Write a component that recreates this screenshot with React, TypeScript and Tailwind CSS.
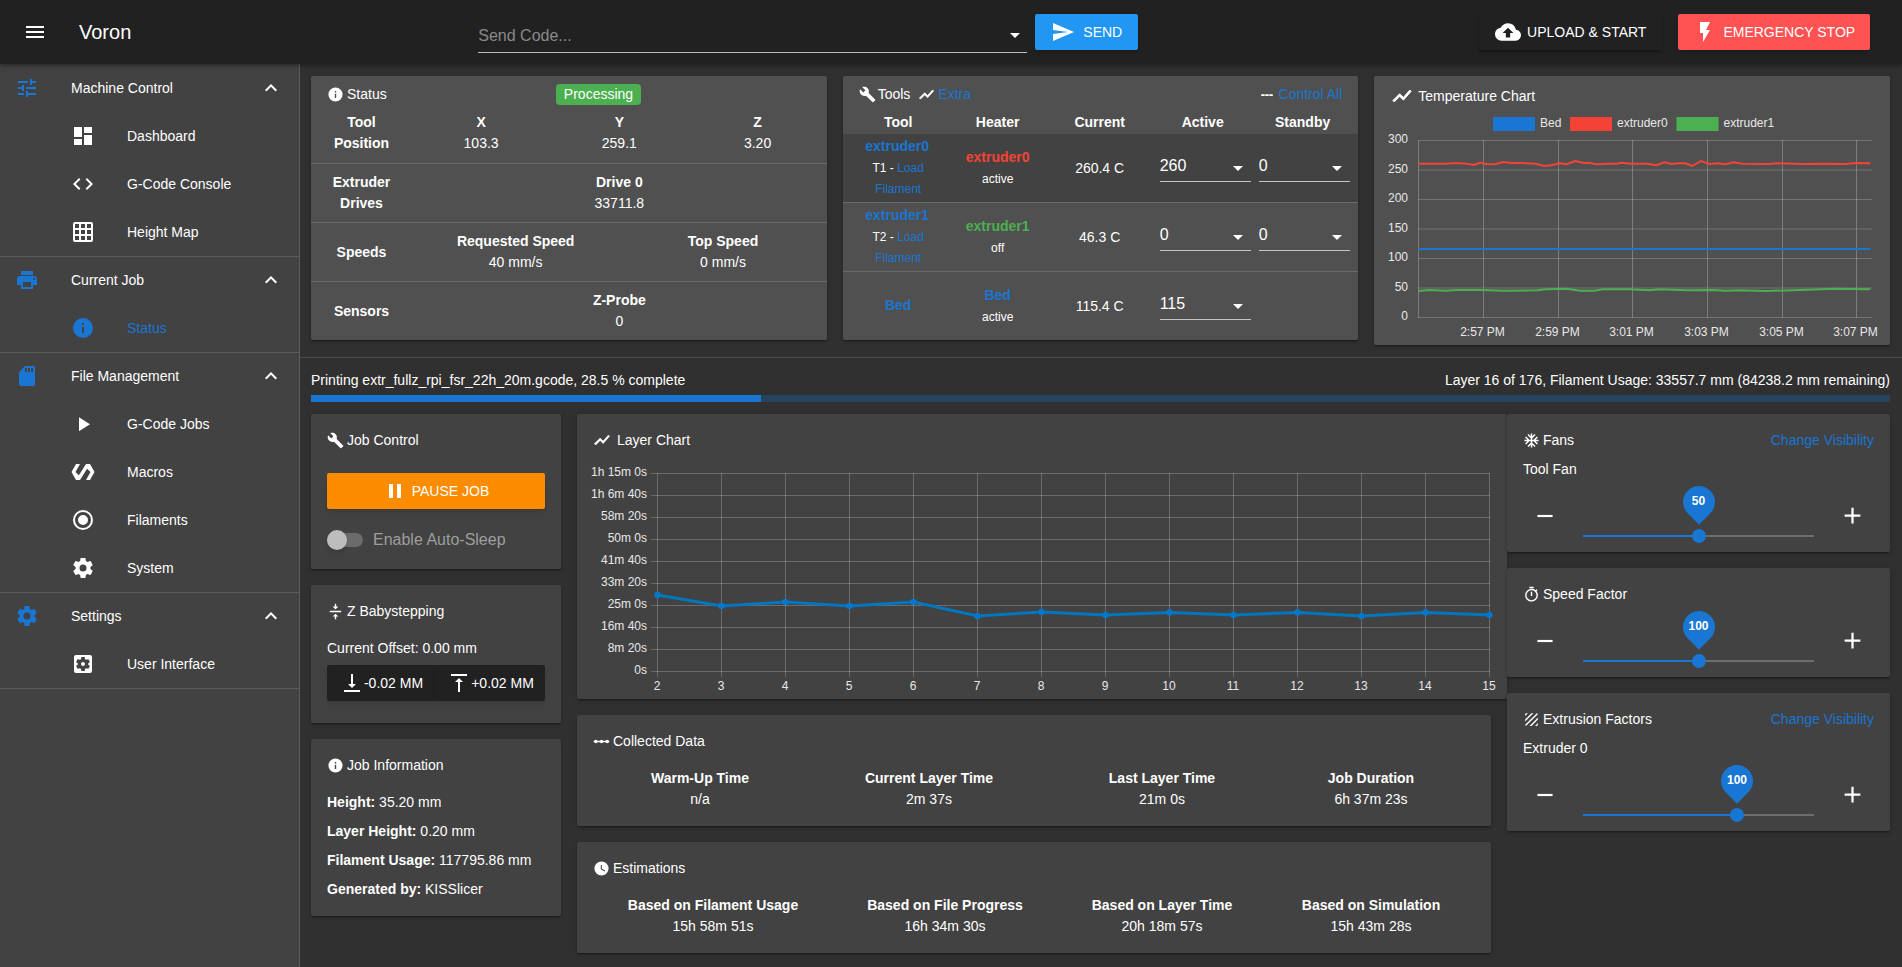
import React from "react";

const P = {
  menu: "M3,6H21V8H3V6M3,11H21V13H3V11M3,16H21V18H3V16Z",
  tune: "M3,17V19H9V17H3M3,5V7H13V5H3M13,21V19H21V17H13V15H11V21H13M7,9V11H3V13H7V15H9V9H7M21,13V11H11V13H21M15,9H17V7H21V5H17V3H15V9Z",
  up: "M7.41,15.41L12,10.83L16.59,15.41L18,14L12,8L6,14L7.41,15.41Z",
  dash: "M13,3V9H21V3M13,21H21V11H13M3,21H11V15H3M3,13H11V3H3V13Z",
  code: "M14.6,16.6L19.2,12L14.6,7.4L16,6L22,12L16,18L14.6,16.6M9.4,16.6L4.8,12L9.4,7.4L8,6L2,12L8,18L9.4,16.6Z",
  grid: "M10,4V8H14V4H10M16,4V8H20V4H16M16,10V14H20V10H16M16,16V20H20V16H16M14,20V16H10V20H14M8,20V16H4V20H8M8,14V10H4V14H8M8,8V4H4V8H8M10,14H14V10H10V14M4,2H20A2,2 0 0,1 22,4V20A2,2 0 0,1 20,22H4C2.92,22 2,21.1 2,20V4A2,2 0 0,1 4,2Z",
  printer: "M18,3H6V7H18M19,12A1,1 0 0,1 18,11A1,1 0 0,1 19,10A1,1 0 0,1 20,11A1,1 0 0,1 19,12M16,19H8V14H16M19,8H5A3,3 0 0,0 2,11V17H6V21H18V17H22V11A3,3 0 0,0 19,8Z",
  info: "M13,9H11V7H13M13,17H11V11H13M12,2A10,10 0 0,0 2,12A10,10 0 0,0 12,22A10,10 0 0,0 22,12A10,10 0 0,0 12,2Z",
  sd: "M18,8H16V4H18M15,8H13V4H15M12,8H10V4H12M18,2H10L4,8V20A2,2 0 0,0 6,22H18A2,2 0 0,0 20,20V4A2,2 0 0,0 18,2Z",
  play: "M8,5.14V19.14L19,12.14L8,5.14Z",
  polymer: "M19,4H15L7.9,15.2L4.5,12L9,4H5L0.5,12L5,20H9L16.1,8.8L19.5,12L15,20H19L23.5,12L19,4Z",
  radio: "M12,20A8,8 0 0,1 4,12A8,8 0 0,1 12,4A8,8 0 0,1 20,12A8,8 0 0,1 12,20M12,2A10,10 0 0,0 2,12A10,10 0 0,0 12,22A10,10 0 0,0 22,12A10,10 0 0,0 12,2M12,7A5,5 0 0,0 7,12A5,5 0 0,0 12,17A5,5 0 0,0 17,12A5,5 0 0,0 12,7Z",
  cog: "M12,15.5A3.5,3.5 0 0,1 8.5,12A3.5,3.5 0 0,1 12,8.5A3.5,3.5 0 0,1 15.5,12A3.5,3.5 0 0,1 12,15.5M19.43,12.97C19.47,12.65 19.5,12.33 19.5,12C19.5,11.67 19.47,11.34 19.43,11L21.54,9.37C21.73,9.22 21.78,8.95 21.66,8.73L19.66,5.27C19.54,5.05 19.27,4.96 19.05,5.05L16.56,6.05C16.04,5.66 15.5,5.32 14.87,5.07L14.5,2.42C14.46,2.18 14.25,2 14,2H10C9.75,2 9.54,2.18 9.5,2.42L9.13,5.07C8.5,5.32 7.96,5.66 7.44,6.05L4.95,5.05C4.73,4.96 4.46,5.05 4.34,5.27L2.34,8.73C2.21,8.95 2.27,9.22 2.46,9.37L4.57,11C4.53,11.34 4.5,11.67 4.5,12C4.5,12.33 4.53,12.65 4.57,12.97L2.46,14.63C2.27,14.78 2.21,15.05 2.34,15.27L4.34,18.73C4.46,18.95 4.73,19.03 4.95,18.95L7.44,17.94C7.96,18.34 8.5,18.68 9.13,18.93L9.5,21.58C9.54,21.82 9.75,22 10,22H14C14.25,22 14.46,21.82 14.5,21.58L14.87,18.93C15.5,18.67 16.04,18.34 16.56,17.94L19.05,18.95C19.27,19.03 19.54,18.95 19.66,18.73L21.66,15.27C21.78,15.05 21.73,14.78 21.54,14.63L19.43,12.97Z",
  cogbox: "M19,3H5C3.89,3 3,3.89 3,5V19A2,2 0 0,0 5,21H19A2,2 0 0,0 21,19V5C21,3.89 20.1,3 19,3M17.25,12C17.25,12.23 17.23,12.46 17.2,12.68L18.68,13.84C18.81,13.95 18.85,14.13 18.76,14.29L17.36,16.71C17.27,16.86 17.09,16.92 16.93,16.86L15.19,16.16C14.83,16.44 14.43,16.67 14,16.85L13.75,18.7C13.72,18.87 13.57,19 13.4,19H10.6C10.43,19 10.28,18.87 10.25,18.7L10,16.85C9.56,16.67 9.17,16.44 8.81,16.16L7.07,16.86C6.91,16.92 6.73,16.86 6.64,16.71L5.24,14.29C5.15,14.13 5.19,13.95 5.32,13.84L6.8,12.68C6.77,12.46 6.75,12.23 6.75,12C6.75,11.77 6.77,11.54 6.8,11.32L5.32,10.16C5.19,10.05 5.15,9.86 5.24,9.71L6.64,7.29C6.73,7.13 6.91,7.07 7.07,7.13L8.81,7.84C9.17,7.56 9.56,7.32 10,7.15L10.25,5.29C10.28,5.13 10.43,5 10.6,5H13.4C13.57,5 13.72,5.13 13.75,5.29L14,7.15C14.44,7.32 14.83,7.56 15.19,7.84L16.93,7.13C17.09,7.07 17.27,7.13 17.36,7.29L18.76,9.71C18.85,9.86 18.81,10.05 18.68,10.16L17.2,11.32C17.23,11.54 17.25,11.77 17.25,12ZM12,10C10.89,10 10,10.89 10,12A2,2 0 0,0 12,14A2,2 0 0,0 14,12C14,10.89 13.1,10 12,10Z",
  wrench: "M22.7,19L13.6,9.9C14.5,7.6 14,4.9 12.1,3C10.1,1 7.1,0.6 4.7,1.7L9,6L6,9L1.6,4.7C0.4,7.1 0.9,10.1 2.9,12.1C4.8,14 7.5,14.5 9.8,13.6L18.9,22.7C19.3,23.1 19.9,23.1 20.3,22.7L22.6,20.4C23.1,20 23.1,19.3 22.7,19Z",
  chart: "M3.5,18.5L9.5,12.5L13.5,16.5L22,6.92L20.59,5.5L13.5,13.5L9.5,9.5L2,17L3.5,18.5Z",
  cloud: "M14,13V17H10V13H7L12,8L17,13M19.35,10.03C18.67,6.59 15.64,4 12,4C9.11,4 6.6,5.64 5.35,8.03C2.34,8.36 0,10.9 0,14A6,6 0 0,0 6,20H19A5,5 0 0,0 24,15C24,12.36 21.95,10.22 19.35,10.03Z",
  flash: "M7,2V13H10V22L17,10H13L17,2H7Z",
  send: "M2,21L23,12L2,3V10L17,12L2,14V21Z",
  pause: "M14,19H18V5H14M6,19H10V5H6V19Z",
  alignB: "M16 13h-3V3h-2v10H8l4 4 4-4zM4 19v2h16v-2H4z",
  alignT: "M8 11h3v10h2V11h3l-4-4-4 4zM4 3v2h16V3H4z",
  alignC: "M8 19h3v4h2v-4h3l-4-4-4 4zm8-14h-3V1h-2v4H8l4 4 4-4zM4 11v2h16v-2H4z",
  snow: "M22 11h-4.17l3.24-3.24-1.41-1.42L15 11h-2V9l4.66-4.66-1.42-1.41L13 6.17V2h-2v4.17L7.76 2.93 6.34 4.34 11 9v2H9L4.34 6.34 2.93 7.76 6.17 11H2v2h4.17l-3.24 3.24 1.41 1.42L9 13h2v2l-4.66 4.66 1.42 1.41L11 17.83V22h2v-4.17l3.24 3.24 1.42-1.41L13 15v-2h2l4.66 4.66 1.41-1.42L17.83 13H22z",
  timer: "M12,20A7,7 0 0,1 5,13A7,7 0 0,1 12,6A7,7 0 0,1 19,13A7,7 0 0,1 12,20M19.03,7.39L20.45,5.97C20,5.46 19.55,5 19.04,4.56L17.62,6C16.07,4.74 14.12,4 12,4A9,9 0 0,0 3,13A9,9 0 0,0 12,22C17,22 21,17.97 21,13C21,10.88 20.26,8.93 19.03,7.39M11,14H13V8H11M15,1H9V3H15V1Z",
  texture: "M9.29,21H12.12L21,12.12V9.29M19,21C19.55,21 20.05,20.78 20.41,20.41C20.78,20.05 21,19.55 21,19V17L17,21M5,3A2,2 0 0,0 3,5V7L7,3M11.88,3L3,11.88V14.71L14.71,3M19.5,3.08L3.08,19.5C3.17,19.84 3.35,20.15 3.59,20.41C3.85,20.65 4.16,20.83 4.5,20.92L20.93,4.5C20.84,4.16 20.65,3.85 20.41,3.59C20.15,3.35 19.84,3.17 19.5,3.08Z",
  clock: "M12,2A10,10 0 0,0 2,12A10,10 0 0,0 12,22A10,10 0 0,0 22,12A10,10 0 0,0 12,2M16.2,16.2L11,13V7H12.5V12.2L17,14.9L16.2,16.2Z",
  minus: "M19,13H5V11H19V13Z",
  plus: "M19,13H13V19H11V13H5V11H11V5H13V11H19V13Z",
  dashes: "M2,10.500H8V13.500H2ZM9,10.500H15V13.500H9ZM16,10.500H22V13.500H16Z",
  dots: "M1,11H23V13H1ZM4,9.500A2.5,2.5 0 1,1 4,14.500A2.5,2.5 0 1,1 4,9.500ZM12,9.500A2.5,2.5 0 1,1 12,14.500A2.5,2.5 0 1,1 12,9.500ZM20,9.500A2.5,2.5 0 1,1 20,14.500A2.5,2.5 0 1,1 20,9.500Z",
};

function Icon({ d, size = 24, className = "", odd = false }: { d: string; size?: number; className?: string; odd?: boolean }) {
  return (
    <svg width={size} height={size} viewBox="0 0 24 24" className={`shrink-0 fill-current ${className}`}>
      <path d={d} fillRule={odd ? "evenodd" : "nonzero"} />
    </svg>
  );
}

const nav = [
  { icon: P.tune, title: "Machine Control", items: [[P.dash, "Dashboard"], [P.code, "G-Code Console"], [P.grid, "Height Map"]] },
  { icon: P.printer, title: "Current Job", items: [[P.info, "Status"]] },
  { icon: P.sd, title: "File Management", items: [[P.play, "G-Code Jobs"], [P.polymer, "Macros"], [P.radio, "Filaments"], [P.cog, "System"]] },
  { icon: P.cog, title: "Settings", items: [[P.cogbox, "User Interface"]] },
];

function Sidebar() {
  return (
    <aside className="w-[300px] h-[903px] shrink-0 bg-[#424242] border-r border-[#5c5c5c] text-sm">
      {nav.map((g, n) => (
        <div key={g.title} className="border-b border-[#5c5c5c]">
          <div className={`${n === 0 ? "h-12" : "h-[47px] pb-px"} flex items-center`}>
            <Icon d={g.icon} className="ml-[15px] text-[#1976d2]" />
            <span className="ml-8 flex-1">{g.title}</span>
            <Icon d={P.up} className="mr-[16px]" />
          </div>
          {g.items.map(([ic, label]) => (
            <div key={label} className={`flex items-center h-12 ${label === "Status" ? "text-[#1976d2]" : ""}`}>
              <Icon d={ic} odd={label === "User Interface"} className="ml-[71px]" />
              <span className="ml-8">{label}</span>
            </div>
          ))}
        </div>
      ))}
    </aside>
  );
}

function Header() {
  return (
    <header className="relative z-10 h-16 bg-[#212121] flex items-center shadow-[0_2px_4px_rgba(0,0,0,0.35)]">
      <Icon d={P.menu} className="ml-[23px]" />
      <span className="ml-[32px] text-xl">Voron</span>
      <div className="ml-[347px] w-[549px] h-[38px] mt-[2px] mb-[-2px] border-b border-[#bdbdbd] flex items-center justify-between pr-[7px]">
        <span className="text-base text-[#8a8a8a] mt-[4px]">Send Code...</span>
        <span className="w-0 h-0 border-x-[5px] border-x-transparent border-t-[5px] border-t-white mt-[4px]" />
      </div>
      <button className="ml-2 w-[103px] h-9 rounded-[2px] bg-[#2196f3] text-sm flex items-center justify-center gap-2 shadow-md">
        <Icon d={P.send} />
        SEND
      </button>
      <button className="ml-[341px] w-[183px] h-9 rounded-[2px] bg-[#212121] text-sm flex items-center justify-center gap-[6px] shadow-[0_2px_3px_rgba(0,0,0,0.35)]">
        <Icon d={P.cloud} size={26} />
        UPLOAD &amp; START
      </button>
      <button className="ml-4 w-[192px] h-9 rounded-[2px] bg-[#ff5252] text-sm flex items-center justify-center gap-[6px] shadow-md">
        <Icon d={P.flash} />
        EMERGENCY STOP
      </button>
    </header>
  );
}

const shadow = "shadow-[0_3px_1px_-2px_rgba(0,0,0,0.2),0_2px_2px_0_rgba(0,0,0,0.14),0_1px_5px_0_rgba(0,0,0,0.12)]";

function Title({ icon, children, className = "" }: { icon: string; children: React.ReactNode; className?: string }) {
  return (
    <div className={`flex items-center gap-[3px] leading-5 ${className}`}>
      <Icon d={icon} size={17} />
      <span>{children}</span>
    </div>
  );
}

function Two({ a, b, boldB = false }: { a: string; b: string; boldB?: boolean }) {
  return (
    <div className="text-center leading-[21px]">
      <div className="font-bold">{a}</div>
      <div className={boldB ? "font-bold" : ""}>{b}</div>
    </div>
  );
}

function StatusCard() {
  return (
    <div className={`bg-[#505050] rounded-[2px] h-[264px] text-sm ${shadow}`}>
      <div className="h-9 flex items-start pt-[8px] pl-4">
        <Title icon={P.info} className="w-[229px] h-[20px]">Status</Title>
        <span className="w-[85px] h-[21px] rounded bg-[#4caf50] text-center leading-[21px]">Processing</span>
      </div>
      <div className="h-[52px] grid grid-cols-[101px_1fr_1fr_1fr] items-start border-b border-[#6a6a6a]">
        <Two a="Tool" b="Position" boldB /><Two a="X" b="103.3" /><Two a="Y" b="259.1" /><Two a="Z" b="3.20" />
      </div>
      <div className="h-[59px] grid grid-cols-[101px_1fr] items-center border-b border-[#6a6a6a]">
        <Two a="Extruder" b="Drives" boldB /><Two a="Drive 0" b="33711.8" />
      </div>
      <div className="h-[59px] grid grid-cols-[101px_1fr_1fr] items-center border-b border-[#6a6a6a]">
        <div className="text-center font-bold">Speeds</div>
        <Two a="Requested Speed" b="40 mm/s" /><Two a="Top Speed" b="0 mm/s" />
      </div>
      <div className="h-[58px] grid grid-cols-[101px_1fr] items-center">
        <div className="text-center font-bold">Sensors</div><Two a="Z-Probe" b="0" />
      </div>
    </div>
  );
}

function Sel({ v }: { v: string }) {
  return (
    <div className="w-[91px] h-[27px] border-b border-[#c4c4c4] flex items-center justify-between pr-2 text-base">
      <span className="leading-5 -mt-[5px]">{v}</span>
      <span className="w-0 h-0 border-x-[5px] border-x-transparent border-t-[5px] border-t-white" />
    </div>
  );
}

const toolGrid = "grid grid-cols-[111px_88px_113px_96px_107px]";

function ToolRow({ name, sub, heater, hc, state, cur, a, s, dark, last }: { name: string; sub?: string; heater: string; hc: string; state: string; cur: string; a: string; s?: string; dark?: boolean; last?: boolean }) {
  return (
    <div className={`${toolGrid} ${last ? "h-[68px] rounded-b-[2px]" : "h-[69px] border-b border-[#6a6a6a]"} ${dark ? "bg-[#424242]" : ""} items-center`}>
      <div className={`text-center leading-[21px] ${sub ? "pr-[2px]" : ""}`}>
        <div className="font-bold text-[#1976d2] -mt-px mb-px">{name}</div>
        {sub && (
          <div className="text-xs leading-[21px] pl-[2px]">
            {sub} - <span className="text-[#1976d2]">Load</span>
            <br />
            <span className="text-[#1976d2]">Filament</span>
          </div>
        )}
      </div>
      <div className="text-center leading-[21px]">
        <div className={`font-bold ${hc}`}>{heater}</div>
        <div className="text-xs leading-[21px] mt-px">{state}</div>
      </div>
      <div className="text-center pl-[3px]">{cur}</div>
      <div className="self-start pt-[21px] pl-[5px]"><Sel v={a} /></div>
      <div className="self-start pt-[21px] pl-2">{s && <Sel v={s} />}</div>
    </div>
  );
}

function ToolsCard() {
  return (
    <div className={`bg-[#505050] rounded-[2px] h-[264px] text-sm ${shadow}`}>
      <div className="h-9 flex items-start pt-[8px] pl-4 pr-4 leading-[21px]">
        <Icon d={P.wrench} size={17} className="mt-[2px]" />
        <span className="ml-[2px]">Tools</span>
        <Icon d={P.chart} size={17} className="ml-[8px] mt-[2px] stroke-current stroke-1" />
        <span className="ml-[3px] text-[#1976d2]">Extra</span>
        <span className="flex-1" />
        <Icon d={P.dashes} size={14} className="mt-[4px]" />
        <span className="ml-[5px] text-[#1976d2]">Control All</span>
      </div>
      <div className={`${toolGrid} h-[22px] font-bold text-center leading-[21px]`}>
        <div>Tool</div><div>Heater</div><div className="pl-[3px]">Current</div><div>Active</div><div className="pr-[3px]">Standby</div>
      </div>
      <ToolRow dark name="extruder0" sub="T1" heater="extruder0" hc="text-[#f44336]" state="active" cur="260.4 C" a="260" s="0" />
      <ToolRow name="extruder1" sub="T2" heater="extruder1" hc="text-[#4caf50]" state="off" cur="46.3 C" a="0" s="0" />
      <ToolRow last name="Bed" heater="Bed" hc="text-[#1976d2]" state="active" cur="115.4 C" a="115" />
    </div>
  );
}

const zx = (x: number) => 1360 + x / 2.904;
const zy = (y: number) => 60 + y / 3;
const line = (pts: number[][]) => pts.map(([x, y]) => `${zx(x).toFixed(1)},${zy(y).toFixed(1)}`).join(" ");

const red = [[170,311],[250,311],[280,309],[310,311],[330,315],[350,308],[370,313],[395,312],[415,306],[440,309],[465,309],[510,311],[535,318],[555,316],[580,310],[600,313],[625,303],[650,309],[665,308],[685,313],[720,311],[745,311],[760,308],[785,311],[835,311],[860,316],[885,307],[905,312],[925,310],[945,310],[965,318],[990,303],[1015,312],[1040,310],[1060,313],[1085,307],[1110,311],[1185,312],[1210,310],[1285,312],[1340,311],[1410,312],[1440,309],[1482,310]];
const green = [[170,693],[200,690],[250,692],[280,690],[350,690],[420,692],[515,691],[540,688],[600,686],[640,692],[680,692],[705,688],[780,688],[840,691],[870,688],[950,691],[1030,690],[1060,692],[1100,691],[1180,693],[1280,690],[1380,686],[1482,688]];
const blue = [[170,567],[1482,567]];

function TempCard() {
  const ys = [140.5, 170, 199.5, 229, 258.5, 288, 317.5];
  const labels = ["300", "250", "200", "150", "100", "50", "0"];
  const xs = [1418.5, 1483.5, 1558.5, 1632.5, 1707.5, 1782.5, 1856.5];
  const times = ["2:57 PM", "2:59 PM", "3:01 PM", "3:03 PM", "3:05 PM", "3:07 PM"];
  return (
    <div className={`bg-[#505050] rounded-[2px] h-[269px] text-sm ${shadow}`}>
      <div className="h-[34px] pt-[10px] pl-[17px] flex items-start gap-[5px] leading-5">
        <Icon d={P.chart} size={22} className="-mt-px stroke-current stroke-1" />
        <span>Temperature Chart</span>
      </div>
      <svg width="516" height="235" viewBox="1374 110 516 235" className="block text-xs">
        <rect x="1493" y="117" width="42" height="14" fill="#1976d2" />
        <text x="1540" y="126.500" fill="#e8e8e8">Bed</text>
        <rect x="1570" y="117" width="42" height="14" fill="#f44336" />
        <text x="1617" y="126.500" fill="#e8e8e8">extruder0</text>
        <rect x="1676.500" y="117" width="42" height="14" fill="#4caf50" />
        <text x="1723.500" y="126.500" fill="#e8e8e8">extruder1</text>
        {ys.map((y, i) => (
          <g key={y}>
            <line x1="1418" x2="1872" y1={y} y2={y} stroke="rgba(255,255,255,0.2)" />
            <text x="1408" y={y + 2.5} textAnchor="end" fill="#e8e8e8">{labels[i]}</text>
          </g>
        ))}
        {xs.map((x) => (
          <line key={x} x1={x} x2={x} y1="140" y2="318" stroke="rgba(255,255,255,0.25)" />
        ))}
        {times.map((t, i) => (
          <text key={t} x={xs[i + 1] - 1} y="336" textAnchor="middle" fill="#e8e8e8">{t}</text>
        ))}
        <polyline points={line(blue)} fill="none" stroke="#1976d2" strokeWidth="2" />
        <polyline points={line(red)} fill="none" stroke="#f44336" strokeWidth="2" strokeLinejoin="round" />
        <polyline points={line(green)} fill="none" stroke="#4caf50" strokeWidth="2" strokeLinejoin="round" />
      </svg>
    </div>
  );
}

function JobControl() {
  return (
    <div className={`bg-[#424242] rounded-[2px] h-[155px] px-4 pt-4 text-sm ${shadow}`}>
      <Title icon={P.wrench}>Job Control</Title>
      <button className="mt-[23px] w-full h-9 rounded-[2px] bg-[#fb8c00] flex items-center justify-center gap-[5px] shadow-md">
        <Icon d={P.pause} />
        PAUSE JOB
      </button>
      <div className="mt-[21px] flex items-center h-5">
        <div className="relative w-9 h-[14px] rounded-full bg-[#6b6b6b]">
          <div className="absolute left-0 -top-[3px] w-5 h-5 rounded-full bg-[#bdbdbd] shadow-md" />
        </div>
        <span className="ml-[10px] text-base text-[#9e9e9e]">Enable Auto-Sleep</span>
      </div>
    </div>
  );
}

function Baby() {
  return (
    <div className={`bg-[#424242] rounded-[2px] h-[138px] px-4 pt-4 mt-4 text-sm ${shadow}`}>
      <Title icon={P.alignC}>Z Babystepping</Title>
      <div className="mt-[17px] leading-5">Current Offset: 0.00 mm</div>
      <div className="mt-[7px] flex">
        <button className="w-[109px] h-9 rounded-l-[2px] bg-[#212121] flex items-center justify-center shadow-md">
          <Icon d={P.alignB} />-0.02 MM
        </button>
        <button className="w-[109px] h-9 rounded-r-[2px] bg-[#212121] flex items-center justify-center shadow-md">
          <Icon d={P.alignT} />+0.02 MM
        </button>
      </div>
    </div>
  );
}

function JobInfo() {
  const rows = [["Height:", "35.20 mm"], ["Layer Height:", "0.20 mm"], ["Filament Usage:", "117795.86 mm"], ["Generated by:", "KISSlicer"]];
  return (
    <div className={`bg-[#424242] rounded-[2px] h-[177px] px-4 pt-4 mt-4 text-sm ${shadow}`}>
      <Title icon={P.info}>Job Information</Title>
      <div className="mt-[13px]">
        {rows.map(([a, b]) => (
          <div key={a} className="leading-[29px]"><b>{a}</b> {b}</div>
        ))}
      </div>
    </div>
  );
}

function LayerChart() {
  const ylab = ["1h 15m 0s", "1h 6m 40s", "58m 20s", "50m 0s", "41m 40s", "33m 20s", "25m 0s", "16m 40s", "8m 20s", "0s"];
  const data = [595, 606, 602, 606, 602, 616, 612, 615, 612.5, 615, 612.5, 616, 612.5, 615];
  const xs = data.map((_, i) => 657.5 + i * 64);
  return (
    <div className={`bg-[#424242] rounded-[2px] h-[285px] text-sm ${shadow}`}>
      <div className="h-[46px] pt-4 pl-4 flex items-start gap-[6px] leading-5">
        <Icon d={P.chart} size={18} className="mt-[1px] stroke-current stroke-1" />
        <span>Layer Chart</span>
      </div>
      <svg width="930" height="239" viewBox="577 460 930 239" className="block text-xs">
        {ylab.map((t, i) => (
          <g key={t}>
            <line x1="651" x2="1490" y1={473.5 + i * 22} y2={473.5 + i * 22} stroke="rgba(255,255,255,0.22)" />
            <text x="647" y={475.5 + i * 22} textAnchor="end" fill="#e8e8e8">{t}</text>
          </g>
        ))}
        {xs.map((x, i) => (
          <g key={x}>
            <line x1={x} x2={x} y1="473" y2="677" stroke="rgba(255,255,255,0.22)" />
            <text x={x - 0.5} y="690" textAnchor="middle" fill="#e8e8e8">{i + 2}</text>
          </g>
        ))}
        <polyline points={xs.map((x, i) => `${x},${data[i]}`).join(" ")} fill="none" stroke="#0277bd" strokeWidth="3" />
        {xs.map((x, i) => (
          <circle key={x} cx={x} cy={data[i]} r="3.200" fill="#0277cc" />
        ))}
      </svg>
    </div>
  );
}

function Stats({ icon, title, cols, grid, className = "" }: { icon: string; title: string; cols: string[][]; grid: string; className?: string }) {
  return (
    <div className={`bg-[#424242] rounded-[2px] w-[914px] h-[111px] mt-4 px-4 pt-4 text-sm ${shadow} ${className}`}>
      <Title icon={icon}>{title}</Title>
      <div className={`${grid} mt-[17px]`}>
        {cols.map(([a, b]) => <Two key={a} a={a} b={b} />)}
      </div>
    </div>
  );
}

function Slider({ pct, value }: { pct: number; value: number }) {
  return (
    <div className="grid grid-cols-[76px_1fr_76px] h-[73px] items-center justify-items-center">
      <Icon d={P.minus} size={26} />
      <div className="relative w-full h-full">
        <div className="absolute left-0 right-0 top-[56px] h-[2px] bg-[#6d6d6d]" />
        <div className="absolute left-0 top-[56px] h-[2px] bg-[#1976d2]" style={{ width: `${pct}%` }} />
        <div className="absolute top-[50px] w-[14px] h-[14px] -ml-[7px] rounded-full bg-[#1976d2]" style={{ left: `${pct}%` }} />
        <div className="absolute top-[7px] w-8 h-8 -ml-4 rounded-[50%_50%_0] rotate-45 bg-[#1976d2]" style={{ left: `${pct}%` }} />
        <div className="absolute top-[12px] w-8 -ml-4 text-center text-xs font-bold leading-[20px]" style={{ left: `${pct}%` }}>{value}</div>
      </div>
      <Icon d={P.plus} size={27} />
    </div>
  );
}

function FactorCard({ icon, title, sub, pct, value, className = "" }: { icon: string; title: string; sub?: string; pct: number; value: number; className?: string }) {
  return (
    <div className={`bg-[#424242] rounded-[2px] text-sm ${shadow} ${className}`}>
      <div className="pt-4 pl-4 pr-4 flex items-center justify-between leading-5">
        <Title icon={icon}>{title}</Title>
        {sub && <span className="text-[#1976d2]">Change Visibility</span>}
      </div>
      {sub && <div className="pl-4 mt-[9px] leading-5">{sub}</div>}
      <Slider pct={pct} value={value} />
    </div>
  );
}

export default function App() {
  return (
    <div className="w-[1902px] h-[967px] overflow-hidden bg-[#303030] text-white font-['Liberation_Sans',Arial,sans-serif]">
      <Header />
      <div className="flex">
        <Sidebar />
        <main className="flex-1 min-w-0">
          <div className="grid grid-cols-3 gap-4 items-start pt-3 pl-[11px] pr-3">
            <StatusCard />
            <ToolsCard />
            <TempCard />
          </div>
          <div className="mt-3 h-px bg-[#4a4a4a]" />
          <div className="pl-[11px] pr-3 pt-3 text-sm">
            <div className="flex justify-between leading-5">
              <span>Printing extr_fullz_rpi_fsr_22h_20m.gcode, 28.5 % complete</span>
              <span>Layer 16 of 176, Filament Usage: 33557.7 mm (84238.2 mm remaining)</span>
            </div>
            <div className="mt-[5px] h-[7px] bg-[#26435f]">
              <div className="h-full w-[28.5%] bg-[#1976d2]" />
            </div>
            <div className="mt-3 flex items-start">
              <div className="w-[250px] shrink-0">
                <JobControl />
                <Baby />
                <JobInfo />
              </div>
              <div className="w-[930px] shrink-0 ml-4">
                <LayerChart />
                <Stats
                  icon={P.dots}
                  title="Collected Data"
                  grid="grid grid-cols-[214px_244px_222px_196px]"
                  cols={[["Warm-Up Time", "n/a"], ["Current Layer Time", "2m 37s"], ["Last Layer Time", "21m 0s"], ["Job Duration", "6h 37m 23s"]]}
                />
                <Stats
                  icon={P.clock}
                  title="Estimations"
                  grid="grid grid-cols-[240px_224px_210px_208px]"
                  cols={[["Based on Filament Usage", "15h 58m 51s"], ["Based on File Progress", "16h 34m 30s"], ["Based on Layer Time", "20h 18m 57s"], ["Based on Simulation", "15h 43m 28s"]]}
                />
              </div>
              <div className="w-[383px] shrink-0">
                <FactorCard icon={P.snow} title="Fans" sub="Tool Fan" pct={50} value={50} />
                <FactorCard icon={P.timer} title="Speed Factor" pct={50} value={100} className="mt-4" />
                <FactorCard icon={P.texture} title="Extrusion Factors" sub="Extruder 0" pct={66.67} value={100} className="mt-4" />
              </div>
            </div>
          </div>
        </main>
      </div>
    </div>
  );
}
